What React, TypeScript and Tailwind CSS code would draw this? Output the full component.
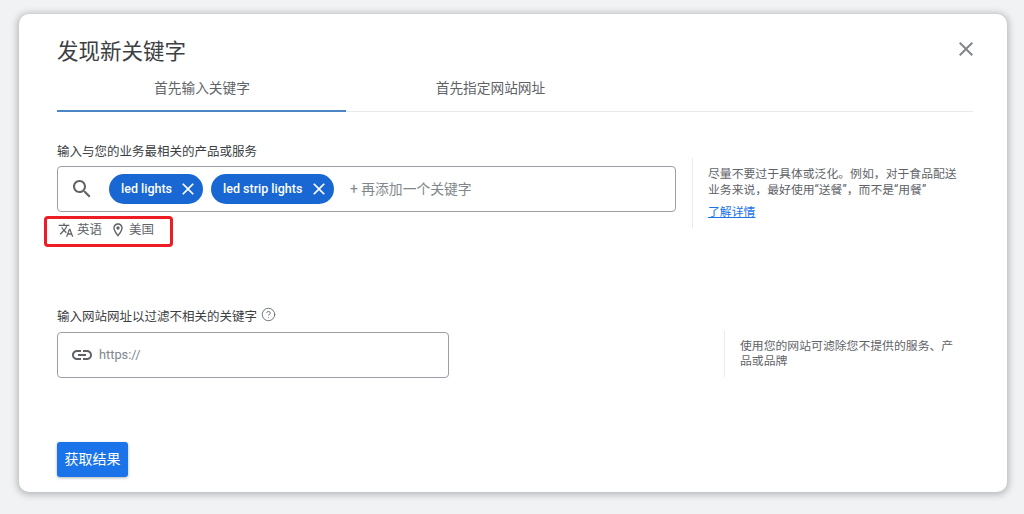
import React from 'react';
import { CircleHelp } from 'lucide-react';

const FONT = "font-['Roboto','Noto_Sans_CJK_SC',sans-serif]";

const Glyph: React.FC<{ d: string; size: number; className?: string }> = ({ d, size, className }) => (
  <svg width={size} height={size} viewBox="0 0 24 24" fill="currentColor" className={`shrink-0 ${className ?? ''}`}>
    <path d={d} />
  </svg>
);

const CLOSE = 'M19 6.41 17.59 5 12 10.59 6.41 5 5 6.41 10.59 12 5 17.59 6.41 19 12 13.41 17.59 19 19 17.59 13.41 12z';
const SEARCH = 'M15.5 14h-.79l-.28-.27C15.41 12.59 16 11.11 16 9.5 16 5.91 13.09 3 9.5 3S3 5.91 3 9.5 5.91 16 9.5 16c1.61 0 3.09-.59 4.23-1.57l.27.28v.79l5 4.99L20.49 19l-4.99-5zm-6 0C7.01 14 5 11.99 5 9.5S7.01 5 9.5 5 14 7.01 14 9.5 11.99 14 9.5 14z';
const TRANSLATE = 'M12.87 15.07l-2.54-2.51.03-.03c1.74-1.94 2.98-4.17 3.71-6.53H17V4h-7V2H8v2H1v1.99h11.17C11.5 7.92 10.44 9.75 9 11.35 8.07 10.32 7.3 9.19 6.69 8h-2c.73 1.63 1.73 3.17 2.98 4.56l-5.09 5.02L4 19l5-5 3.11 3.11.76-2.04zM18.5 10h-2L12 22h2l1.12-3h4.75L21 22h2l-4.5-12zm-2.62 7l1.62-4.33L19.12 17h-3.24z';
const PLACE = 'M12 2C8.13 2 5 5.13 5 9c0 5.25 7 13 7 13s7-7.75 7-13c0-3.87-3.13-7-7-7zM7 9c0-2.76 2.24-5 5-5s5 2.24 5 5c0 2.88-2.88 7.19-5 9.88C9.92 16.21 7 11.85 7 9zm5-2.5a2.5 2.5 0 1 0 0 5 2.5 2.5 0 0 0 0-5z';
const LINK = 'M3.9 12c0-1.71 1.39-3.1 3.1-3.1h4V7H7c-2.76 0-5 2.24-5 5s2.24 5 5 5h4v-1.9H7c-1.71 0-3.1-1.39-3.1-3.1zM8 13h8v-2H8v2zm9-6h-4v1.9h4c1.71 0 3.1 1.39 3.1 3.1s-1.39 3.1-3.1 3.1h-4V17h4c2.76 0 5-2.24 5-5s-2.24-5-5-5z';

const Chip: React.FC<{ label: string; width: string }> = ({ label, width }) => (
  <div className={`flex h-[30px] ${width} items-center justify-between rounded-full bg-[#1967d2] pl-3 pr-[5px] text-[12.5px] font-medium text-white`}>
    <span>{label}</span>
    <Glyph d={CLOSE} size={20} />
  </div>
);

const SideNote: React.FC<{ className: string; children: React.ReactNode }> = ({ className, children }) => (
  <div className={`border-l border-[#e8eaed] pl-[15px] text-[11.85px] text-[#5f6368] ${className}`}>
    {children}
  </div>
);

export default function App() {
  return (
    <div className={`h-[514px] w-[1024px] overflow-hidden bg-[#f0f2f4] pl-[19px] pt-[14px] ${FONT}`}>
      <div className="relative h-[478px] w-[988px] rounded-[10px] bg-white pl-[38px] pr-[34px] pt-[24px] shadow-[0_1px_6px_2px_rgba(60,64,67,0.3)]">
        <Glyph d={CLOSE} size={24} className="absolute right-[29px] top-[23px] text-[#80868b]" />
        <h1 className="h-[28px] text-[21.5px] leading-[28px] text-[#3c4043]">发现新关键字</h1>

        <div className="mt-[9px] flex h-[37px] w-[916px] border-b border-[#e8eaed]">
          <div className="h-[37px] w-[289px] border-b-2 border-[#4a86c5] pl-[1px] pt-[1px] text-center text-[13.7px] leading-[24px] text-[#5f6368]">
            首先输入关键字
          </div>
          <div className="w-[289px] pt-[1px] text-center text-[13.7px] leading-[24px] text-[#5f6368]">
            首先指定网站网址
          </div>
        </div>

        <div className="mt-[32px] flex">
          <div className="w-[619px]">
            <div className="text-[12.5px] leading-[16px] text-[#3c4043]">输入与您的业务最相关的产品或服务</div>
            <div className="mt-[6px] flex h-[46px] items-center rounded border border-[#9aa0a6] pl-[12px]">
              <Glyph d={SEARCH} size={24} className="text-[#5f6368]" />
              <div className="ml-[15px] flex gap-[8px]">
                <Chip label="led lights" width="w-[94px]" />
                <Chip label="led strip lights" width="w-[123px]" />
              </div>
              <span className="ml-[16px] text-[13.8px] text-[#80868b]">+ 再添加一个关键字</span>
            </div>
            <div className="-ml-[13px] mt-[4px] flex h-[31px] w-[129px] items-center rounded-[4px] border-[3px] border-[#ee1c25] pb-[3px] pl-[11px] text-[12.5px] text-[#5f6368]">
              <Glyph d={TRANSLATE} size={16} />
              <span className="ml-[3px]">英语</span>
              <Glyph d={PLACE} size={16} className="ml-[8px]" />
              <span className="ml-[3px]">美国</span>
            </div>
          </div>
          <SideNote className="ml-[16px] mt-[14px] h-[70px] w-[281px] pt-[8px] leading-[16px]">
            <div className="w-[256px]">尽量不要过于具体或泛化。例如，对于食品配送业务来说，最好使用“送餐”，而不是“用餐”</div>
            <div className="mt-[6px] text-[#1a73e8] underline">了解详情</div>
          </SideNote>
        </div>

        <div className="mt-[62px] flex">
          <div className="w-[392px]">
            <div className="flex h-[16px] items-center text-[12.5px] leading-[16px] text-[#3c4043]">
              输入网站网址以过滤不相关的关键字
              <CircleHelp size={15} strokeWidth={1.4} className="ml-[4px] -mt-[6px] text-[#5f6368]" />
            </div>
            <div className="mt-[7px] flex h-[46px] items-center rounded border border-[#9aa0a6] pl-[12px] text-[12.8px] text-[#80868b]">
              <Glyph d={LINK} size={24} className="text-[#5f6368]" />
              <span className="ml-[5px]">https://</span>
            </div>
          </div>
          <SideNote className="ml-[275px] mt-[22px] h-[46px] w-[240px] pt-[8px] leading-[15px]">
            使用您的网站可滤除您不提供的服务、产品或品牌
          </SideNote>
        </div>

        <button className="mt-[64px] flex h-[35px] w-[71px] items-center justify-center rounded-[3px] bg-[#1a73e8] text-[14px] text-white shadow-[0_1px_3px_rgba(60,64,67,0.4)]">
          获取结果
        </button>
      </div>
    </div>
  );
}
